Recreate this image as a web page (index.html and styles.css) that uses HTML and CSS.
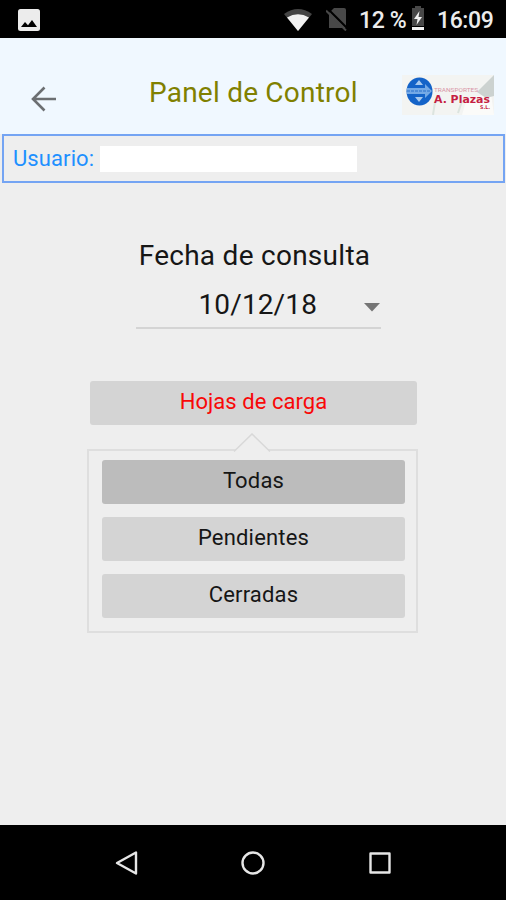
FILE: index.html
```html
<!DOCTYPE html>
<html lang="es">
<head>
<meta charset="utf-8">
<title>Panel de Control</title>
<link rel="stylesheet" href="styles.css">
</head>
<body>
<div class="status">
  <svg class="status-photo" width="22" height="22" viewBox="0 0 22 22"><rect width="22" height="22" rx="2.500" fill="#ececec"/><path d="M3 18l4-5 3 3.200 4-5.200 5 7z" fill="#000"/></svg>
  <svg class="status-wifi" width="28" height="22" viewBox="0 0 28 22"><path d="M0 5Q14-5 28 5L14 22z" fill="#444"/><path d="M3 8.500Q14 2 25 8.500L14 22z" fill="#f2f2f2"/></svg>
  <svg class="status-sim" width="22" height="23" viewBox="0 0 22 23"><path d="M8 0h10q2 0 2 2v18H3V5z" fill="#484848"/><path d="M2 1l21 21" stroke="#000" stroke-width="2"/><path d="M0 2.500l20 20" stroke="#484848" stroke-width="2"/></svg>
  <span class="status-pct">12&nbsp;%</span>
  <svg class="status-battery" width="14" height="24" viewBox="0 0 14 24"><path d="M4 0h6v2h3v18H1V2h3z" fill="#484848"/><path d="M8.500 5L3 13h3.500L5.500 19 11 11H7.500z" fill="#f2f2f2"/><path d="M1 21h12v3H1z" fill="#f2f2f2"/></svg>
  <span class="status-time">16:09</span>
</div>
<header class="header">
  <svg class="back" width="26" height="26" viewBox="0 0 26 26" fill="none" stroke="#6c6f72" stroke-width="2.600"><path d="M25 13H2M13.500 1.500L2 13l11.500 11.500"/></svg>
  <h1 class="title">Panel de Control</h1>
  <svg class="logo" width="92" height="40" viewBox="0 0 92 40">
    <path d="M0 0h92v40H0z" fill="#f3f4f2"/>
    <path d="M65 23l24-4 3 21H60z" fill="#fbfbf9"/><path d="M92 0L75 17l9 6 8-2z" fill="#ccd2d0"/>
    <path d="M33 27l-2 13M60 26l-4 12" stroke="#dce4df" stroke-width="2"/>
    <ellipse cx="17.500" cy="16.500" rx="13" ry="14" fill="#1463c8"/>
    <path d="M5 13h18v-4l7 7-7 7v-4H5z" fill="#74a9e6"/><path d="M17 5l4 5h-8zM17 27l4-5h-8z" fill="#a8c9ee"/><path d="M5 16h23" stroke="#2b70cb" stroke-dasharray="3 1"/>
    <text class="logo-small" x="32" y="17" textLength="44" lengthAdjust="spacingAndGlyphs">TRANSPORTES</text>
    <text class="logo-name" x="32" y="28" textLength="56" lengthAdjust="spacingAndGlyphs">A. Plazas</text>
    <text class="logo-suffix" x="78" y="34" textLength="10" lengthAdjust="spacingAndGlyphs">S.L.</text>
  </svg>
</header>
<section class="user"><span class="user-label">Usuario:</span><span class="user-value"></span></section>
<main class="main">
  <div class="date-label">Fecha de consulta</div>
  <div class="select"><span class="date">10/12/18</span><svg class="caret" width="16" height="9" viewBox="0 0 16 9"><path d="M0 0h16L8 8.500z" fill="#757575"/></svg></div>
  <div class="btn btn-main"><span class="red">Hojas de carga</span></div>
  <div class="panel">
    <svg class="notch" width="40" height="20" viewBox="0 0 40 20"><path d="M2 18.500L20 1l18 17.500V20H2z" fill="#eee"/><path d="M2 18.500L20 1l18 17.500" fill="none" stroke="#d8d8d8" stroke-width="1.500"/></svg>
    <div class="btn btn-active"><span>Todas</span></div>
    <div class="btn"><span>Pendientes</span></div>
    <div class="btn"><span>Cerradas</span></div>
  </div>
</main>
<nav class="nav">
  <svg width="24" height="26" viewBox="0 0 24 26" fill="none" stroke="#e6e6e6" stroke-width="2.400" stroke-linejoin="round"><path d="M22 2.500v21L3 13z"/></svg>
  <svg width="24" height="26" viewBox="0 0 24 26" fill="none" stroke="#e6e6e6" stroke-width="2.400"><circle cx="12" cy="13" r="10.500"/></svg>
  <svg width="24" height="26" viewBox="0 0 24 26" fill="none" stroke="#e6e6e6" stroke-width="2.400" stroke-linejoin="round"><path d="M2.500 3.500h19v19h-19z"/></svg>
</nav>
</body>
</html>
```

FILE: styles.css
```css
* { box-sizing: border-box; }
body {
  margin: 0;
  width: 506px;
  height: 900px;
  display: flex;
  flex-direction: column;
  overflow: hidden;
  background: #eee;
  color: #161616;
  font-family: Roboto, sans-serif;
}
svg { display: block; flex: none; }
.status {
  height: 38px;
  flex: none;
  display: flex;
  align-items: center;
  padding: 1px 0 0 18px;
  background: #000;
  color: #ececec;
  font-size: 23px;
  font-weight: 500;
  letter-spacing: -.4px;
  white-space: nowrap;
}
.status-wifi { margin-left: 244px; }
.status-sim { margin-left: 14px; }
.status-pct { width: 47px; margin: 2px 0 0 11px; }
.status-battery { margin: -3px 0 0 5px; }
.status-time { margin: 2px 0 0 12px; }
.header {
  height: 96px;
  flex: none;
  display: flex;
  align-items: flex-start;
  padding-left: 31px;
  background: #f0f8ff;
}
.back { margin-top: 48px; }
.title {
  width: 212px;
  margin: 35px 0 0 92px;
  color: #808000;
  font-size: 28px;
  font-weight: 400;
  line-height: 40px;
  letter-spacing: .22px;
  white-space: nowrap;
}
.logo { margin: 37px 0 0 41px; }
.logo-small { font: 5px Roboto, sans-serif; fill: #d894a6; }
.logo-name { font: 700 11px "DejaVu Sans", sans-serif; fill: #c51e43; }
.logo-suffix { font: 700 5px "DejaVu Sans", sans-serif; fill: #c51e43; }
.user {
  height: 49px;
  flex: none;
  display: flex;
  align-items: center;
  margin: 0 1px 0 2px;
  padding-left: 9px;
  border: 2px solid #74a4f3;
}
.user-label { width: 87px; color: #1e90ff; font-size: 22px; line-height: 30px; letter-spacing: .1px; }
.user-value { width: 257px; height: 26px; background: #fff; }
.main {
  flex: 1;
  display: flex;
  flex-direction: column;
  align-items: center;
}
.date-label {
  margin: 53px 0 0 3px;
  font-size: 28px;
  line-height: 40px;
  letter-spacing: .27px;
  white-space: nowrap;
}
.select {
  width: 245px;
  height: 53px;
  margin-left: 10px;
  position: relative;
  display: flex;
  align-items: flex-start;
  border-bottom: 2px solid #d4d4d4;
  padding: 9px 0 0 63px;
}
.date { width: 120px; font-size: 28px; line-height: 40px; letter-spacing: .12px; }
.caret { margin: 18px 0 0 45px; }
.btn {
  height: 44px;
  display: flex;
  justify-content: center;
  padding-top: 1px;
  border-radius: 3px;
  background: #d4d4d4;
  font-size: 22px;
  line-height: 40px;
  letter-spacing: .18px;
}
.btn-main { width: 327px; margin: 52px 0 0 1px; letter-spacing: .05px; }
.red { color: #f80808; }
.panel {
  width: 331px;
  height: 184px;
  margin: 24px 1px 0 0;
  position: relative;
  display: flex;
  flex-direction: column;
  gap: 13px;
  padding: 9px 11px 0 13px;
  border: 2px solid #dedede;
}
.notch { position: absolute; top: -18px; left: 143px; }
.btn-active { background: #bcbcbc; }
.nav {
  height: 75px;
  flex: none;
  display: flex;
  justify-content: center;
  align-items: center;
  gap: 103px;
  background: #000;
}
```
